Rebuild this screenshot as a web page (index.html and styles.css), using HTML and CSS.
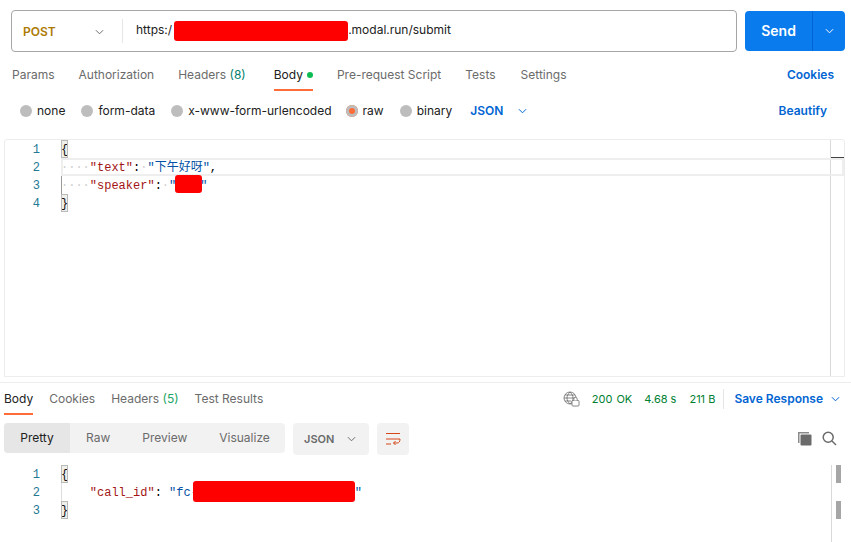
FILE: index.html
```html
<!DOCTYPE html>
<html lang="en">
<head>
<meta charset="utf-8">
<title>POST submit</title>
<link rel="stylesheet" href="styles.css">
</head>
<body>
<main class="app">
  <section class="request-line">
    <div class="url-box">
      <div class="method"><span class="method-name">POST</span>
        <svg class="chev method-chev" viewBox="0 0 10 6"><path d="M1 1l4 4 4-4"/></svg>
      </div>
      <div class="url"><span>https:/</span><span class="redact r-url"></span><span>.modal.run/submit</span></div>
    </div>
    <div class="send">
      <span class="send-label">Send</span>
      <span class="send-more"><svg class="chev white" viewBox="0 0 10 6"><path d="M1 1l4 4 4-4"/></svg></span>
    </div>
  </section>

  <nav class="req-tabs">
    <span class="tab">Params</span>
    <span class="tab">Authorization</span>
    <span class="tab">Headers <em class="count">(8)</em></span>
    <span class="tab active t-body">Body<i class="dot"></i></span>
    <span class="tab">Pre-request Script</span>
    <span class="tab t-tests">Tests</span>
    <span class="tab">Settings</span>
    <span class="link cookies">Cookies</span>
  </nav>

  <div class="body-options">
    <label class="radio r1"><i class="circle"></i>none</label>
    <label class="radio r2"><i class="circle"></i>form-data</label>
    <label class="radio r3"><i class="circle"></i>x-www-form-urlencoded</label>
    <label class="radio r4"><i class="circle on"></i>raw</label>
    <label class="radio"><i class="circle"></i>binary</label>
    <span class="link json-pick">JSON<svg class="chev blue" viewBox="0 0 10 6"><path d="M1 1l4 4 4-4"/></svg></span>
    <span class="link beautify">Beautify</span>
  </div>

  <section class="editor">
    <div class="gutter"><span>1</span><span>2</span><span>3</span><span>4</span></div>
    <div class="code">
      <div class="line"><b class="bracket">{</b></div>
      <div class="line current"><span class="ws">····</span><span class="key">"text"</span><span class="punc">:</span><span class="ws">·</span><span class="str">"下午好呀"</span><span class="punc">,</span></div>
      <div class="line"><span class="ws">····</span><span class="key">"speaker"</span><span class="punc">:</span><span class="ws">·</span><span class="str">"</span><span class="redact r-speaker"></span><span class="str">"</span></div>
      <div class="line"><b class="bracket">}</b></div>
    </div>
    <div class="scroll"><i class="thumb"></i></div>
  </section>

  <section class="response">
    <nav class="res-tabs">
      <span class="tab active">Body</span>
      <span class="tab">Cookies</span>
      <span class="tab">Headers <em class="count res-count">(5)</em></span>
      <span class="tab">Test Results</span>
      <div class="status">
        <svg class="globe" viewBox="0 0 17 16"><circle cx="7" cy="7" r="6"/><path d="M1 7h12M7 1c-4 4-4 8 0 12M7 1c4 4 4 8 0 12M2 4h10M2 10h6"/><rect class="lock" x="9" y="9.5" width="7" height="5.5" rx=".8"/><path class="lock" d="M10.8 9.5V8a1.7 1.7 0 0 1 3.4 0v1.5"/></svg>
        <span class="ok s1">200 OK</span>
        <span class="ok s2">4.68 s</span>
        <span class="ok s3">211 B</span>
        <span class="link save">Save Response<svg class="chev blue" viewBox="0 0 10 6"><path d="M1 1l4 4 4-4"/></svg></span>
      </div>
    </nav>
    <div class="res-tools">
      <div class="segments">
        <span class="seg seg-on">Pretty</span>
        <span class="seg s-raw">Raw</span>
        <span class="seg s-prev">Preview</span>
        <span class="seg s-vis">Visualize</span>
      </div>
      <div class="format"><span>JSON</span><svg class="chev" viewBox="0 0 10 6"><path d="M1 1l4 4 4-4"/></svg></div>
      <div class="wrap-btn"><svg viewBox="0 0 14 12"><path d="M0 .5h14M0 6h14M0 11h5"/><path d="M14 6c0 2.500-.8 4-3 4H7.500M9.500 8l-2 2 2 2"/></svg></div>
      <div class="tools-right">
        <svg class="copy" viewBox="0 0 15 15"><path class="copy-back" d="M1 12V1h11v1.500H2.500V12z"/><rect class="copy-front" x="3.500" y="3.500" width="11" height="11" rx="1"/></svg>
        <svg class="search" viewBox="0 0 15 15"><circle cx="6.200" cy="6.200" r="5"/><path d="M10 10l4 4"/></svg>
      </div>
    </div>
    <div class="res-code">
      <div class="gutter res-gutter"><span>1</span><span>2</span><span>3</span></div>
      <div class="code res-lines">
        <div class="line"><b class="bracket">{</b></div>
        <div class="line"><span class="res-ws">    </span><span class="key">"call_id"</span><span class="punc">:</span><span class="res-ws"> </span><span class="str">"fc-</span><span class="redact r-call"></span><span class="str">"</span></div>
        <div class="line"><b class="bracket">}</b></div>
      </div>
      <div class="scroll res-scroll"><i class="thumb2"></i><i class="thumb2"></i></div>
    </div>
  </section>
</main>
</body>
</html>
```
FILE: styles.css
```css
* { box-sizing: border-box; }
html, body { margin: 0; padding: 0; background: #fff; }
body { width: 851px; height: 542px; overflow: hidden; font-family: Inter, "Liberation Sans", sans-serif; font-size: 12px; color: #212121; }
em, i { font-style: normal; }
b { font-weight: 400; }
.app { display: flex; flex-direction: column; height: 542px; }

.chev { width: 9px; height: 6px; fill: none; stroke: #6b6b6b; stroke-width: 1.100; flex: none; }
.chev.white { stroke: #fff; }
.chev.blue { stroke: #0265d2; }
.redact { display: inline-block; background: #f00; border-radius: 3px; }

.request-line { display: flex; padding: 10px 6px 0 11px; gap: 8px; height: 51px; }
.url-box { width: 727px; height: 42px; display: flex; align-items: center; border: 1px solid #a6a6a6; border-radius: 4px; padding-left: 11px; }
.method { width: 100px; height: 24px; flex: none; display: flex; align-items: center; border-right: 1px solid #e6e6e6; }
.method-name { font-weight: 600; color: #ad7a03; width: 72px; }
.method-chev { margin-top: 1px; }
.url { padding-left: 13px; display: flex; align-items: center; height: 20px; margin-top: -4px; color: #212121; }
.r-url { width: 174px; height: 20px; margin: 4px 0 0 2px; }
.send { width: 100px; height: 40px; margin-top: 1px; background: #097bed; border-radius: 4px; display: flex; color: #fff; }
.send-label { flex: 1; text-align: center; line-height: 39px; font-size: 14px; font-weight: 600; border-right: 1px solid #0265d2; }
.send-more { width: 32px; display: flex; align-items: center; justify-content: center; }

.req-tabs { display: flex; align-items: flex-start; height: 40px; padding: 11px 0 0 12px; gap: 24px; }
.tab { color: #6b6b6b; line-height: 18px; height: 29px; padding-top: 4px; white-space: nowrap; }
.tab.active { color: #212121; border-bottom: 2px solid #ff6c37; }
.count { color: #007f6d; }
.res-count { color: #1aa564; }
.t-body { display: flex; align-items: flex-start; margin-left: 4px; }
.t-tests { margin-right: 1px; }
.dot { width: 6px; height: 6px; margin: 6px 0 0 4px; border-radius: 50%; background: #0cbb52; }
.link { color: #0265d2; font-weight: 600; }
.cookies { margin-left: auto; margin-right: 17px; line-height: 18px; padding-top: 4px; }

.body-options { display: flex; align-items: center; height: 42px; padding: 0 24px 3px 20px; }
.radio { display: flex; align-items: center; gap: 5px; color: #212121; margin-right: 15px; }
.r1, .r2, .r4 { margin-right: 16px; }
.r3 { margin-right: 14px; }
.circle { width: 12px; height: 12px; border-radius: 50%; background: #bdbdbd; }
.circle.on { background: #ff6c37; box-shadow: inset 0 0 0 3px #bdbdbd; }
.json-pick { display: flex; align-items: center; gap: 15px; margin-left: 3px; }
.beautify { margin-left: auto; }

.editor { display: flex; height: 238px; margin: 6px 6px 0 4px; border: 1px solid #ededed; border-radius: 3px 3px 0 0; }
.gutter { width: 35px; flex: none; display: flex; flex-direction: column; align-items: flex-end; font-family: "Liberation Mono", monospace; font-size: 12px; line-height: 18px; color: #237893; padding-top: 1px; }
.code { flex: 1; font-family: "Liberation Mono", "Noto Sans CJK SC", monospace; font-size: 12px; position: relative; }
.editor .code { margin-left: 21px; }
.code::before { content: ""; position: absolute; left: 0; top: 18px; width: 1px; height: 36px; background: #999; }
.res-lines::before { top: 18px; height: 18px; background: #ddd; }
.line { height: 18px; line-height: 20px; white-space: pre; position: relative; }
.current { margin-right: -14px; box-shadow: inset 0 0 0 2px #eee; }
.ws { color: #cfcfcf; }
.res-ws { white-space: pre; }
.key { color: #a31515; }
.str { color: #0451a5; }
.punc { color: #000; }
.bracket { display: inline-block; width: 7.200px; height: 18px; background: #f0f0ea; outline: 1px solid #b9b9b9; outline-offset: -1px; color: #111; }
.r-speaker { width: 27px; height: 18px; vertical-align: top; margin: -1px -2px 0 -1px; }
.scroll { width: 14px; flex: none; border-left: 1px solid #d9d9d9; padding-top: 17px; }
.thumb { display: block; height: 2px; background: #424242; }

.response { display: flex; flex-direction: column; flex: 1; margin-top: 5px; border-top: 1px solid #ededed; }
.res-tabs { display: flex; align-items: flex-start; height: 32px; padding: 7px 11px 0 4px; gap: 16px; }
.res-tabs .tab { height: 25px; padding-top: 0; }
.status { margin-left: auto; display: flex; align-items: center; height: 18px; }
.globe { width: 17px; height: 16px; fill: none; stroke: #6b6b6b; stroke-width: .8; margin-right: 12px; }
.lock { fill: #fff; stroke: #6b6b6b; }
.ok { color: #007f31; white-space: nowrap; font-size: 11px; }
.s1 { word-spacing: 1px; margin-right: 12px; }
.s2 { margin-right: 13px; }
.s3 { padding-right: 8px; border-right: 1px solid #e6e6e6; line-height: 20px; margin-right: 10px; }
.save { display: flex; align-items: center; gap: 8px; margin-top: -1px; }

.res-tools { display: flex; align-items: flex-start; padding: 0 14px 0 4px; height: 41px; margin-top: 8px; }
.segments { display: flex; width: 281px; height: 30px; background: #f2f2f2; border-radius: 4px; overflow: hidden; }
.seg { color: #6b6b6b; line-height: 29px; }
.seg-on { width: 66px; text-align: center; color: #212121; background: #e6e6e6; }
.s-raw { margin-left: 16px; }
.s-prev { margin-left: 32px; }
.s-vis { margin-left: 32px; }
.format { width: 76px; height: 32px; margin-left: 8px; background: #f2f2f2; border-radius: 4px; display: flex; align-items: center; padding-left: 11px; gap: 13px; font-size: 11px; font-weight: 600; color: #6b6b6b; }
.wrap-btn { width: 32px; height: 32px; margin-left: 8px; background: #f2f2f2; border-radius: 4px; display: flex; align-items: center; justify-content: center; }
.wrap-btn svg { width: 14px; height: 12px; fill: none; stroke: #d8471a; stroke-width: 1; overflow: visible; }
.tools-right { margin-left: auto; display: flex; align-items: center; gap: 10px; height: 30px; }
.copy { width: 15px; height: 15px; }
.copy-back { fill: #8a8a8a; }
.copy-front { fill: #6b6b6b; }
.search { width: 15px; height: 15px; fill: none; stroke: #6b6b6b; stroke-width: 1.500; }

.res-code { display: flex; flex: 1; padding: 1px 9px 0 4px; }
.res-gutter { width: 36px; }
.res-lines { margin-left: 21px; }
.r-call { width: 162px; height: 21px; vertical-align: top; margin: -2px 0 0 -5px; }
.res-scroll { width: 11px; padding-top: 0; display: flex; flex-direction: column; align-items: flex-end; gap: 18px; padding-right: 1px; }
.thumb2 { width: 5px; height: 18px; background: #a6a6a6; display: block; }
```
